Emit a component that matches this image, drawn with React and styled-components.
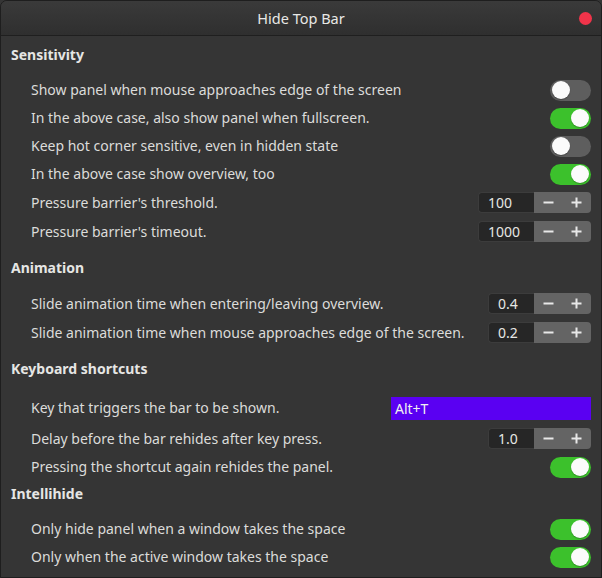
import React from "react";
import styled, { createGlobalStyle } from "styled-components";

const GlobalStyle = createGlobalStyle`
  html, body {
    margin: 0;
    padding: 0;
    background: #353535;
  }
  body {
    font-family: "Noto Sans", "DejaVu Sans", sans-serif;
  }
`;

const Window = styled.div`
  width: 602px;
  height: 578px;
  box-sizing: border-box;
  background: #353535;
  border: 1px solid #1e1e1e;
  border-radius: 7px 7px 0 0;
  overflow: hidden;
  color: #eeeeec;
  display: flex;
  flex-direction: column;
`;

const TitleBar = styled.div`
  height: 34px;
  flex: none;
  position: relative;
  display: flex;
  align-items: center;
  justify-content: center;
  background: linear-gradient(#3a3a3a, #2f2f2f);
  border-bottom: 1px solid #1f1f1f;
  font-size: 14.5px;
  color: #e8e8e6;
`;

const CloseDot = styled.span`
  position: absolute;
  right: 9px;
  top: 11px;
  width: 13px;
  height: 13px;
  border-radius: 50%;
  background: #f0344a;
`;

const Content = styled.div`
  display: flex;
  flex-direction: column;
`;

const Header = styled.div`
  padding: ${(p) => p.$top}px 10px ${(p) => p.$bottom}px;
  height: 20px;
  line-height: 20px;
  font-size: 14px;
  font-weight: 700;
  color: #e6e6e4;
`;

const Row = styled.div`
  height: ${(p) => p.$h || 28}px;
  display: flex;
  align-items: center;
  justify-content: space-between;
  padding: 0 10px 0 30px;
  font-size: 14px;
  color: #dcdcda;
`;

const Label = styled.span`
  margin-top: -1px;
`;

const Switch = styled.div`
  width: 41px;
  height: 21px;
  box-sizing: border-box;
  border-radius: 11px;
  background: ${(p) => (p.$on ? "#3cc12c" : "#5e5e5e")};
  position: relative;
  flex: none;
  &::after {
    content: "";
    position: absolute;
    top: 1.5px;
    left: ${(p) => (p.$on ? "21px" : "2px")};
    width: 18px;
    height: 18px;
    border-radius: 50%;
    background: #fbfbfb;
    box-shadow: 0 1px 1px rgba(0, 0, 0, 0.25);
  }
`;

const Spin = styled.div`
  display: flex;
  height: 21px;
  flex: none;
`;

const SpinEntry = styled.div`
  width: ${(p) => p.$w}px;
  box-sizing: border-box;
  background: #262626;
  border: 1px solid #3c3c3c;
  border-right: none;
  border-radius: 4px 0 0 4px;
  padding-left: 9px;
  font-size: 14px;
  line-height: 19px;
  color: #e6e6e4;
`;

const SpinButtons = styled.div`
  width: 57px;
  display: flex;
  background: #646464;
  border-radius: 0 4px 4px 0;
`;

const SpinButton = styled.span`
  flex: 1;
  display: flex;
  align-items: center;
  justify-content: center;
  svg {
    width: 11px;
    height: 11px;
  }
`;

const KeyEntry = styled.div`
  width: 200px;
  height: 23px;
  box-sizing: border-box;
  background: #5a00f2;
  padding-left: 4px;
  line-height: 23px;
  font-size: 14px;
  color: #f0f0f0;
`;

function Minus() {
  return (
    <svg viewBox="0 0 11 11">
      <rect x="0.5" y="4.5" width="10" height="2" fill="#e8e8e8" />
    </svg>
  );
}

function Plus() {
  return (
    <svg viewBox="0 0 11 11">
      <rect x="0.5" y="4.5" width="10" height="2" fill="#e8e8e8" />
      <rect x="4.5" y="0.5" width="2" height="10" fill="#e8e8e8" />
    </svg>
  );
}

function SpinBox({ value, width }) {
  return (
    <Spin>
      <SpinEntry $w={width}>{value}</SpinEntry>
      <SpinButtons>
        <SpinButton><Minus /></SpinButton>
        <SpinButton><Plus /></SpinButton>
      </SpinButtons>
    </Spin>
  );
}

export default function App() {
  return (
    <>
      <GlobalStyle />
      <Window>
        <TitleBar>
          Hide Top Bar
          <CloseDot />
        </TitleBar>
        <Content>
          <Header $top={9} $bottom={11}>Sensitivity</Header>
          <Row>
            <Label>Show panel when mouse approaches edge of the screen</Label>
            <Switch />
          </Row>
          <Row>
            <Label>In the above case, also show panel when fullscreen.</Label>
            <Switch $on />
          </Row>
          <Row>
            <Label>Keep hot corner sensitive, even in hidden state</Label>
            <Switch />
          </Row>
          <Row>
            <Label>In the above case show overview, too</Label>
            <Switch $on />
          </Row>
          <Row $h={29}>
            <Label>Pressure barrier's threshold.</Label>
            <SpinBox value="100" width={56} />
          </Row>
          <Row $h={29}>
            <Label>Pressure barrier's timeout.</Label>
            <SpinBox value="1000" width={56} />
          </Row>

          <Header $top={12} $bottom={11}>Animation</Header>
          <Row $h={29}>
            <Label>Slide animation time when entering/leaving overview.</Label>
            <SpinBox value="0.4" width={46} />
          </Row>
          <Row $h={29}>
            <Label>Slide animation time when mouse approaches edge of the screen.</Label>
            <SpinBox value="0.2" width={46} />
          </Row>

          <Header $top={12} $bottom={13}>Keyboard shortcuts</Header>
          <Row $h={32}>
            <Label>Key that triggers the bar to be shown.</Label>
            <KeyEntry>Alt+T</KeyEntry>
          </Row>
          <Row $h={29}>
            <Label>Delay before the bar rehides after key press.</Label>
            <SpinBox value="1.0" width={46} />
          </Row>
          <Row>
            <Label>Pressing the shortcut again rehides the panel.</Label>
            <Switch $on />
          </Row>

          <Header $top={3} $bottom={11}>Intellihide</Header>
          <Row>
            <Label>Only hide panel when a window takes the space</Label>
            <Switch $on />
          </Row>
          <Row>
            <Label>Only when the active window takes the space</Label>
            <Switch $on />
          </Row>
        </Content>
      </Window>
    </>
  );
}
